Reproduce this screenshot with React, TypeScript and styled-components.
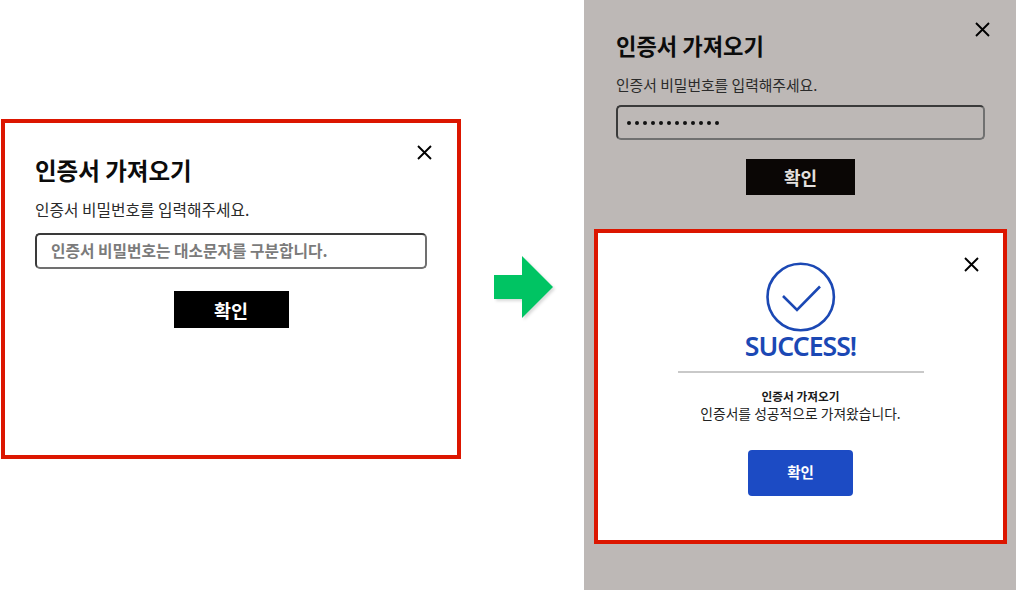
import styled, { createGlobalStyle } from "styled-components"

const GlobalStyle = createGlobalStyle`
  html, body {
    margin: 0;
    padding: 0;
    background: #ffffff;
  }
  * {
    box-sizing: border-box;
  }
`

const FONT = `"Noto Sans CJK KR", "Noto Sans", sans-serif`

const Page = styled.div`
  width: 1016px;
  height: 590px;
  display: flex;
  overflow: hidden;
  font-family: ${FONT};
`

const LeftSide = styled.section`
  width: 584px;
  flex: none;
  display: flex;
  padding: 119px 0 0 1px;
`

const ArrowSlot = styled.div`
  margin: 136px 0 0 33px;
  width: 63px;
  height: 68px;
`

const RightSide = styled.section`
  flex: 1;
  background: #bdb8b6;
  padding: 0 9px 0 10px;
  display: flex;
  flex-direction: column;
`

const RedFrame = styled.div<{ $w: number; $h: number }>`
  width: ${(p) => p.$w}px;
  height: ${(p) => p.$h}px;
  border: 4px solid #dc1600;
  background: #ffffff;
  flex: none;
`

const SuccessFrame = styled(RedFrame)`
  margin-top: 34px;
`

const FormBody = styled.div<{ $dim?: boolean }>`
  position: relative;
  padding: ${(p) => (p.$dim ? "29px 22px 0 22px" : "31px 30px 0 30px")};
`

const CloseIcon = styled.svg<{ $top: number; $right: number }>`
  position: absolute;
  top: ${(p) => p.$top}px;
  right: ${(p) => p.$right}px;
  width: 17px;
  height: 17px;
`

const Title = styled.h2<{ $dim?: boolean }>`
  margin: 0;
  font-size: ${(p) => (p.$dim ? "22.2px" : "23.5px")};
  line-height: 33px;
  font-weight: 700;
  color: #0c0c0c;
`

const Desc = styled.p<{ $dim?: boolean }>`
  margin: 12px 0 0;
  font-size: ${(p) => (p.$dim ? "14.8px" : "15.75px")};
  line-height: 22px;
  font-weight: 400;
  color: #2a2a2a;
`

const Field = styled.div<{ $dim?: boolean }>`
  margin-top: ${(p) => (p.$dim ? "9px" : "12px")};
  height: ${(p) => (p.$dim ? "35px" : "36px")};
  border: 2px solid #3a3a3a;
  border-bottom-color: #707070;
  border-right-color: #707070;
  border-radius: 5px;
  padding: 0 0 2px ${(p) => (p.$dim ? "9px" : "14px")};
  display: flex;
  align-items: center;
  font-size: 15.75px;
  font-weight: 700;
  color: #7b7b7b;
`

const Dots = styled.div`
  display: flex;
  gap: 4px;
  padding-top: 2px;
`

const Dot = styled.span`
  width: 4px;
  height: 4px;
  border-radius: 50%;
  background: #111111;
`

const BlackButton = styled.button<{ $dim?: boolean }>`
  display: block;
  width: ${(p) => (p.$dim ? "109px" : "115px")};
  height: ${(p) => (p.$dim ? "36px" : "37px")};
  margin: ${(p) => (p.$dim ? "19px" : "22px")} auto 0;
  border: none;
  background: ${(p) => (p.$dim ? "#0a0605" : "#000000")};
  color: ${(p) => (p.$dim ? "#e4e0de" : "#ffffff")};
  font-family: inherit;
  font-size: ${(p) => (p.$dim ? "18px" : "18.5px")};
  font-weight: 700;
  padding: 0;
`

const SuccessBody = styled.div`
  position: relative;
  height: 100%;
  display: flex;
  flex-direction: column;
  align-items: center;
  padding-top: 29px;
`

const SuccessMark = styled.svg`
  width: 70px;
  height: 70px;
  flex: none;
`

const SuccessLabel = styled.div`
  margin-top: -3px;
  font-family: "Noto Sans", sans-serif;
  font-size: 26.6px;
  line-height: 34px;
  font-weight: 600;
  letter-spacing: -1px;
  color: #1b48b4;
`

const Divider = styled.hr`
  width: 246px;
  margin: 8px 0 0;
  border: none;
  border-top: 2px solid #c9c9c9;
`

const SuccessTitle = styled.div`
  margin-top: 14px;
  font-size: 11.7px;
  line-height: 18px;
  font-weight: 700;
  color: #1a1a1a;
`

const SuccessText = styled.div`
  font-size: 13.8px;
  line-height: 18px;
  margin-top: -1px;
  color: #222222;
`

const BlueButton = styled.button`
  margin-top: 28px;
  width: 105px;
  height: 46px;
  border: none;
  border-radius: 4px;
  background: #1c4bc4;
  color: #ffffff;
  font-family: inherit;
  font-size: 14.5px;
  font-weight: 700;
  padding: 0 0 4px;
`

function Close({ top, right }: { top: number; right: number }) {
  return (
    <CloseIcon $top={top} $right={right} viewBox="0 0 17 17">
      <path d="M2 2 L15 15 M15 2 L2 15" stroke="#000" strokeWidth="1.9" fill="none" />
    </CloseIcon>
  )
}

function SuccessPanel() {
  return (
    <SuccessFrame $w={413} $h={315}>
      <SuccessBody>
        <Close top={23} right={23} />
        <SuccessMark viewBox="0 0 70 70">
          <circle cx="34.7" cy="35" r="33.2" stroke="#1b48b4" strokeWidth="2.6" fill="none" />
          <path d="M17 34 L31 48 L54 24.5" stroke="#1b48b4" strokeWidth="2.6" fill="none" />
        </SuccessMark>
        <SuccessLabel>SUCCESS!</SuccessLabel>
        <Divider />
        <SuccessTitle>인증서 가져오기</SuccessTitle>
        <SuccessText>인증서를 성공적으로 가져왔습니다.</SuccessText>
        <BlueButton>확인</BlueButton>
      </SuccessBody>
    </SuccessFrame>
  )
}

function App() {
  return (
    <Page>
      <GlobalStyle />
      <LeftSide>
        <RedFrame $w={460} $h={340}>
          <FormBody>
            <Close top={21} right={24} />
            <Title>인증서 가져오기</Title>
            <Desc>인증서 비밀번호를 입력해주세요.</Desc>
            <Field>인증서 비밀번호는 대소문자를 구분합니다.</Field>
            <BlackButton>확인</BlackButton>
          </FormBody>
        </RedFrame>
        <ArrowSlot>
          <svg width="63" height="68" viewBox="0 0 63 68">
            <defs>
              <filter id="arrowShadow" x="-20%" y="-20%" width="150%" height="150%">
                <feDropShadow dx="2" dy="2" stdDeviation="1.5" floodColor="#000" floodOpacity="0.15" />
              </filter>
            </defs>
            <path d="M0 20 H28 V1 L59 32 L28 63 V44 H0 Z" fill="#00c463" filter="url(#arrowShadow)" />
          </svg>
        </ArrowSlot>
      </LeftSide>
      <RightSide>
        <FormBody $dim>
          <Close top={21} right={16} />
          <Title $dim>인증서 가져오기</Title>
          <Desc $dim>인증서 비밀번호를 입력해주세요.</Desc>
          <Field $dim>
            <Dots>
              {Array.from({ length: 12 }).map((_, i) => (
                <Dot key={i} />
              ))}
            </Dots>
          </Field>
          <BlackButton $dim>확인</BlackButton>
        </FormBody>
        <SuccessPanel />
      </RightSide>
    </Page>
  )
}

export default App
